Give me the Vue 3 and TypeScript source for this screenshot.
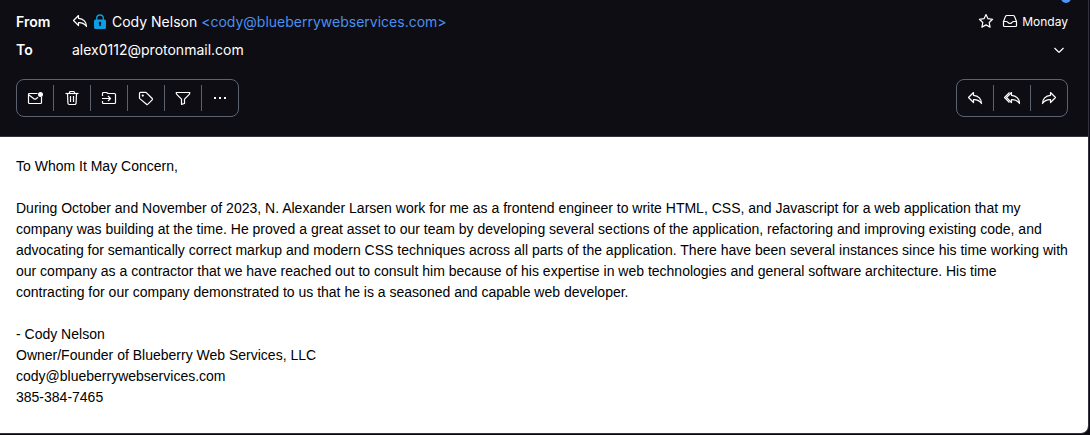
<script setup lang="ts">
interface Action {
  label: string
  paths: string[]
  fills?: string[]
}

const replyPath = 'M6.5 2.5 1.5 7.5l5 5V9.600c3.500-.2 6 .9 8 3.900 0-4.500-3-8-8-8.200z'

const actions: Action[] = [
  {
    label: 'Mark as unread',
    paths: ['M10.500 3.500H2.500a1 1 0 0 0-1 1v8a1 1 0 0 0 1 1h11a1 1 0 0 0 1-1V7', 'm2 5 4.900 3.700a1.800 1.800 0 0 0 2.200 0L11 7.300'],
    fills: ['M13.500 2a2.500 2.500 0 1 1 0 5 2.500 2.500 0 0 1 0-5z'],
  },
  {
    label: 'Move to trash',
    paths: ['M1.500 3.500h13', 'M5.500 3.500v-1a1 1 0 0 1 1-1h3a1 1 0 0 1 1 1v1', 'M3.500 3.500l.4 9.500a1.500 1.500 0 0 0 1.500 1.500h5.200a1.500 1.500 0 0 0 1.500-1.500l.4-9.500', 'M6.500 6v6M9.500 6v6'],
  },
  {
    label: 'Move to folder',
    paths: ['M1.500 6V3.500a1 1 0 0 1 1-1h3l1.500 1h6.500a1 1 0 0 1 1 1v8a1 1 0 0 1-1 1h-11a1 1 0 0 1-1-1V11', 'M1 8.500h8.500M7 6l2.500 2.500L7 11'],
  },
  {
    label: 'Label as',
    paths: ['M1.500 3.300a1 1 0 0 1 1-1h5.100a1 1 0 0 1 .7.3l5.900 5.900a1 1 0 0 1 0 1.400l-4.300 4.300a1 1 0 0 1-1.400 0L1.800 8.600a1 1 0 0 1-.3-.7z'],
    fills: ['M4.800 4.500a1.100 1.100 0 1 1 0 2.200 1.100 1.100 0 0 1 0-2.200z'],
  },
  {
    label: 'Filter on',
    paths: ['M1.200 2.500h13.600c0 1.200-.3 1.700-1 2.400L9.500 9.200v4.300l-3 .8V9.200L2.200 4.900c-.7-.7-1-1.200-1-2.400z'],
  },
  {
    label: 'More',
    paths: [],
    fills: ['M2 7h2v2H2zM7 7h2v2H7zM12 7h2v2h-2z'],
  },
]

const replies: Action[] = [
  { label: 'Reply', paths: [replyPath] },
  {
    label: 'Reply all',
    paths: ['M7.500 2.500 2.500 7.500l5 5V9.600c3.500-.2 6 .9 8 3.900 0-4.500-3-8-8-8.200z', 'M5.500 2.500l-5 5 5 5'],
  },
  { label: 'Forward', paths: ['M9.500 2.500l5 5-5 5V9.600c-3.500-.2-6 .9-8 3.900 0-4.500 3-8 8-8.200z'] },
]

const groups = [
  { name: 'Message actions', items: actions },
  { name: 'Reply actions', items: replies },
]

const paragraph =
  'During October and November of 2023, N. Alexander Larsen work for me as a frontend engineer to write HTML, CSS, and Javascript for a web application that my company was building at the time. He proved a great asset to our team by developing several sections of the application, refactoring and improving existing code, and advocating for semantically correct markup and modern CSS techniques across all parts of the application. There have been several instances since his time working with our company as a contractor that we have reached out to consult him because of his expertise in web technologies and general software architecture. His time contracting for our company demonstrated to us that he is a seasoned and capable web developer.'
</script>

<template>
  <article class="message">
    <span class="marker" aria-hidden="true"></span>
    <header class="head">
      <div class="row">
        <span class="label">From</span>
        <svg class="icon raised" viewBox="0 0 16 16" aria-hidden="true"><path :d="replyPath" /></svg>
        <svg class="lock" viewBox="0 0 16 16" aria-hidden="true">
          <path class="shackle" d="M4.700 6.500V4.300a3.300 3.300 0 0 1 6.600 0v2.200" />
          <path class="lock-body" d="M3.500 5.500h9a1.500 1.500 0 0 1 1.500 1.500v6.500a1.500 1.500 0 0 1-1.500 1.500h-9A1.500 1.500 0 0 1 2 13.500V7a1.500 1.500 0 0 1 1.500-1.500z" />
          <path class="keyhole" d="M8 7.800a1.200 1.200 0 0 1 .8 2.100V12H7.200V9.900A1.200 1.200 0 0 1 8 7.800z" />
        </svg>
        <span class="sender">Cody Nelson <a class="address" href="mailto:cody@blueberrywebservices.com">&lt;cody@blueberrywebservices.com&gt;</a></span>
        <div class="meta">
          <button class="plain raised" type="button" aria-label="Star message">
            <svg class="icon" viewBox="0 0 16 16"><path d="M8 1.500l2 4.200 4.600.6-3.400 3.200.9 4.600L8 11.900l-4.100 2.200.9-4.600L1.400 6.300 6 5.700z" /></svg>
          </button>
          <svg class="icon raised" viewBox="0 0 16 16" role="img" aria-label="Inbox">
            <path d="M1.500 8.500v4a1 1 0 0 0 1 1h11a1 1 0 0 0 1-1v-4L12.500 3.400a1.500 1.500 0 0 0-1.400-.9H4.900a1.500 1.500 0 0 0-1.400.9zM1.500 8.500h3.200c.8 0 1.300 2 3.300 2s2.500-2 3.300-2h3.200" />
          </svg>
          <time class="date">Monday</time>
        </div>
      </div>
      <div class="row">
        <span class="label">To</span>
        <span class="recipient">alex0112@protonmail.com</span>
        <button class="plain details" type="button" aria-label="Show details">
          <svg class="icon" viewBox="0 0 16 16"><path d="M3.500 6l3.800 3.700a1 1 0 0 0 1.400 0L12.500 6" /></svg>
        </button>
      </div>
      <div class="toolbar">
        <div v-for="group in groups" :key="group.name" class="group" role="group" :aria-label="group.name">
          <button v-for="item in group.items" :key="item.label" class="action" type="button" :aria-label="item.label">
            <svg class="icon" viewBox="0 0 16 16">
              <path v-for="d in item.paths" :key="d" :d="d" />
              <path v-for="d in item.fills ?? []" :key="d" class="solid" :d="d" />
            </svg>
          </button>
        </div>
      </div>
    </header>
    <section class="body">
      <p>To Whom It May Concern,</p>
      <p>{{ paragraph }}</p>
      <p>
        - Cody Nelson<br />
        Owner/Founder of Blueberry Web Services, LLC<br />
        cody@blueberrywebservices.com<br />
        385-384-7465
      </p>
    </section>
  </article>
</template>

<style>
body {
  background: #0c0b11;
}
</style>

<style scoped>
.message {
  position: relative;
  margin-right: 1px;
  border-right: 1px solid #343140;
  border-bottom: 1px solid #343140;
  border-radius: 0 0 8px 0;
  overflow: hidden;
  background: #0e0d13;
  color: #fff;
  font: 14px/20px Inter, "Liberation Sans", sans-serif;
}

.marker {
  position: absolute;
  top: -7px;
  right: 17px;
  width: 10px;
  height: 10px;
  border-radius: 50%;
  background: #4a96ff;
}

.head {
  padding: 12px 20px 19px 16px;
  border-bottom: 1px solid #343140;
}

.row {
  display: flex;
  align-items: center;
  height: 20px;
  margin-bottom: 8px;
}

.label {
  width: 56px;
  font-weight: 600;
}

.icon {
  display: block;
  width: 16px;
  height: 16px;
  fill: none;
  stroke: #fff;
  stroke-width: 1.200;
  stroke-linejoin: round;
}

.raised {
  margin-bottom: 2px;
}

.solid {
  fill: #fff;
  stroke: none;
}

.lock {
  width: 16px;
  height: 16px;
  margin: 0 4px;
}

.shackle {
  fill: none;
  stroke: #0d9de3;
  stroke-width: 1.300;
}

.lock-body {
  fill: #0d9de3;
}

.keyhole {
  fill: #0e0d13;
}

.address {
  color: #4a90f0;
  text-decoration: none;
}

.meta {
  display: flex;
  align-items: center;
  gap: 8px;
  margin-left: auto;
}

.date {
  margin-left: -4px;
  font-size: 12px;
  line-height: 16px;
}

.plain {
  padding: 0;
  border: 0;
  background: none;
}

.details {
  margin-left: auto;
  margin-right: 1px;
}

.toolbar {
  display: flex;
  justify-content: space-between;
  margin-top: 19px;
}

.group {
  display: flex;
  border: 1px solid #5b6270;
  border-radius: 8px;
}

.action {
  display: flex;
  align-items: center;
  justify-content: center;
  width: 36px;
  height: 26px;
  margin: 5px 0;
  padding: 0;
  border: 0;
  background: none;
}

.action + .action {
  width: 37px;
  border-left: 1px solid #5b6270;
}

.body {
  padding: 19px 20px 25px 16px;
  background: #fff;
  color: #000;
  font: 14px/21px "Liberation Sans", Arial, sans-serif;
}

.body p {
  margin: 0 0 21px;
}

.body p:last-child {
  margin-bottom: 0;
}
</style>
